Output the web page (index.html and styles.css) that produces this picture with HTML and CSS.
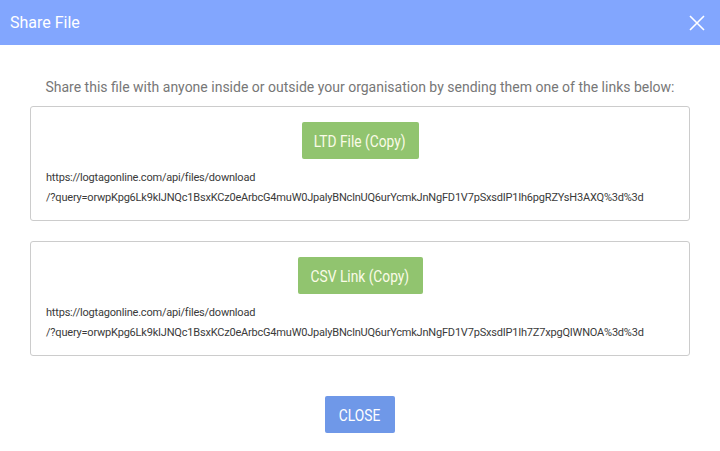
FILE: index.html
```html
<!DOCTYPE html>
<html>
<head>
    <meta name="viewport" content="width=device-width, initial-scale=1.0">
    <link rel="stylesheet" href="styles.css">
</head>
<body>
    <div class="modal">
        <div class="modal-header">
            <div class="modal-title">Share File</div>
            <button class="close-x" aria-label="Close">
                <svg width="16" height="16" viewBox="0 0 16 16">
                    <path d="M1 1 L15 15 M15 1 L1 15" stroke="#fff" stroke-width="1.6" fill="none"/>
                </svg>
            </button>
        </div>
        <div class="modal-body">
            <div class="intro">Share this file with anyone inside or outside your organisation by sending them one of the links below:</div>
            <div class="link-card">
                <button class="btn btn-copy btn-ltd"><span class="btn-label">LTD File (Copy)</span></button>
                <div class="link-text">
                    <div>https://logtagonline.com/api/files/download</div>
                    <div>/?query=orwpKpg6Lk9kIJNQc1BsxKCz0eArbcG4muW0JpalyBNclnUQ6urYcmkJnNgFD1V7pSxsdIP1Ih6pgRZYsH3AXQ%3d%3d</div>
                </div>
            </div>
            <div class="link-card">
                <button class="btn btn-copy btn-csv"><span class="btn-label">CSV Link (Copy)</span></button>
                <div class="link-text">
                    <div>https://logtagonline.com/api/files/download</div>
                    <div>/?query=orwpKpg6Lk9kIJNQc1BsxKCz0eArbcG4muW0JpalyBNclnUQ6urYcmkJnNgFD1V7pSxsdIP1Ih7Z7xpgQIWNOA%3d%3d</div>
                </div>
            </div>
            <div class="footer">
                <button class="btn btn-close"><span class="btn-label">CLOSE</span></button>
            </div>
        </div>
    </div>
</body>
</html>
```

FILE: styles.css
```css
body {
    margin: 0;
    background: #fff;
    font-family: Roboto, "Liberation Sans", sans-serif;
}

.modal {
    width: 720px;
    height: 451px;
    background: #fff;
}

.modal-header {
    height: 45px;
    background: #82a6fe;
    display: flex;
    align-items: center;
    justify-content: space-between;
    padding: 0 15px 0 10px;
}

.modal-title {
    color: #fff;
    font-size: 16px;
}

.close-x {
    background: none;
    border: none;
    padding: 0;
    width: 16px;
    height: 16px;
    cursor: pointer;
    display: flex;
}

.modal-body {
    padding: 30px 30px 0 30px;
}

.intro {
    color: #777;
    font-size: 14px;
    text-align: center;
    line-height: 20px;
    margin-top: 2px;
    margin-bottom: 9px;
}

.link-card {
    border: 1px solid #ccc;
    border-radius: 3px;
    padding: 15px 15px 12px 15px;
    margin-bottom: 20px;
    display: flex;
    flex-direction: column;
    align-items: center;
}

.btn {
    border: none;
    border-radius: 2px;
    font-family: Roboto, "Liberation Sans", sans-serif;
    font-size: 17px;
    height: 37px;
    padding: 0;
    cursor: pointer;
    display: flex;
    align-items: center;
    justify-content: center;
}

/* condensed look of the original button font */
.btn-label {
    display: inline-block;
    white-space: nowrap;
    transform: scaleX(0.81);
}

.btn-copy {
    background: #91c46f;
    color: #fbfbe8;
}

.btn-ltd { width: 117px; }
.btn-csv { width: 125px; }

.link-text {
    align-self: stretch;
    font-size: 11px;
    letter-spacing: -0.2px;
    color: #3a3a3a;
    line-height: 20px;
    margin-top: 9px;
}

.footer {
    display: flex;
    justify-content: center;
    margin-top: 40px;
}

.btn-close {
    background: #6f98e8;
    color: #fff;
    width: 70px;
}
```
